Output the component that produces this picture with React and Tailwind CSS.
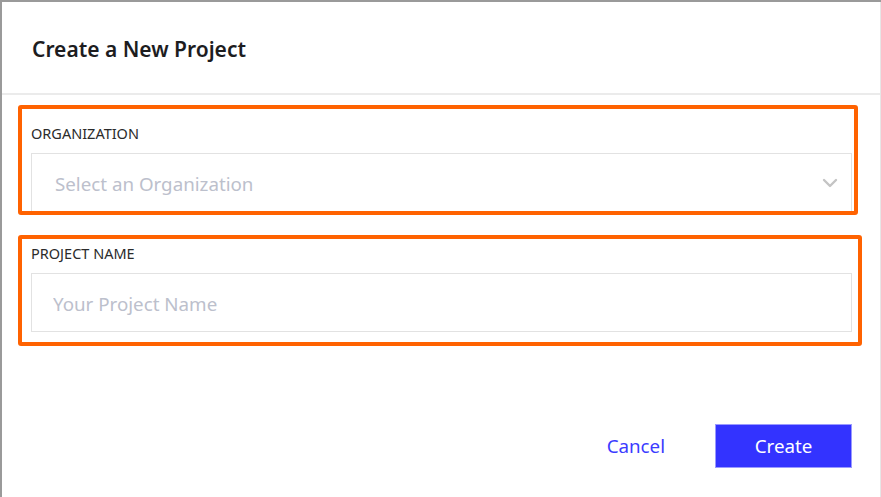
import React from 'react';

const font = { fontFamily: '"Noto Sans", "Open Sans", sans-serif' };

const Chevron = () => (
  <svg className="w-[16px] h-[10px] text-[#c4c4c4]" viewBox="0 0 16 10" fill="none" stroke="currentColor">
    <path d="M2 2l6 6 6-6" strokeWidth={2.4} strokeLinecap="round" strokeLinejoin="round" />
  </svg>
);

const App = () => {
  return (
    <div
      className="relative w-[881px] h-[497px] overflow-hidden bg-white border-t-2 border-l-2 border-[#9a9a9a]"
      style={font}
    >
      <div className="h-full border-r border-[#e6e6e6] flex flex-col">
        {/* header */}
        <div className="pt-[33px] pb-[30px] pl-[30px] border-b-2 border-[#ebebeb]">
          <h1 className="text-[21px] leading-[28px] font-semibold text-[#1d1d1f]">
            Create a New Project
          </h1>
        </div>

        {/* body */}
        <div className="pl-[29px] pr-[28px] pt-[28px] flex flex-col">
          <label className="text-[14.5px] leading-[20px] text-[#2b2b2b]">ORGANIZATION</label>
          <div className="mt-[10px] h-[59px] border border-[#e2e2e2] flex items-center justify-between pl-[23px] pr-[13px]">
            <span className="pt-[4px] text-[18.75px] text-[#bcc0cc]">Select an Organization</span>
            <Chevron />
          </div>

          <label className="mt-[31px] text-[14.5px] leading-[20px] text-[#2b2b2b]">PROJECT NAME</label>
          <div className="mt-[10px] h-[59px] border border-[#e2e2e2] flex items-center pl-[21px] pt-[4px]">
            <input
              className="w-full outline-none bg-transparent text-[18.75px] placeholder:text-[#bcc0cc]"
              placeholder="Your Project Name"
              style={font}
            />
          </div>
        </div>

        {/* footer */}
        <div className="mt-auto mb-[29px] pr-[28px] flex justify-end items-center gap-[50px]">
          <button className="text-[18.75px] text-[#3b3bff]">Cancel</button>
          <button className="w-[137px] h-[44px] bg-[#3333ff] text-white text-[18.75px] border border-[#9a9aff]">
            Create
          </button>
        </div>
      </div>

      {/* annotation highlights */}
      <div className="absolute left-[16px] top-[103px] w-[840px] h-[110px] border-[4px] border-[#ff6200] rounded-[3px] pointer-events-none" />
      <div className="absolute left-[16px] top-[233px] w-[844px] h-[111px] border-[4px] border-[#ff6200] rounded-[3px] pointer-events-none" />
    </div>
  );
};

export default App;
